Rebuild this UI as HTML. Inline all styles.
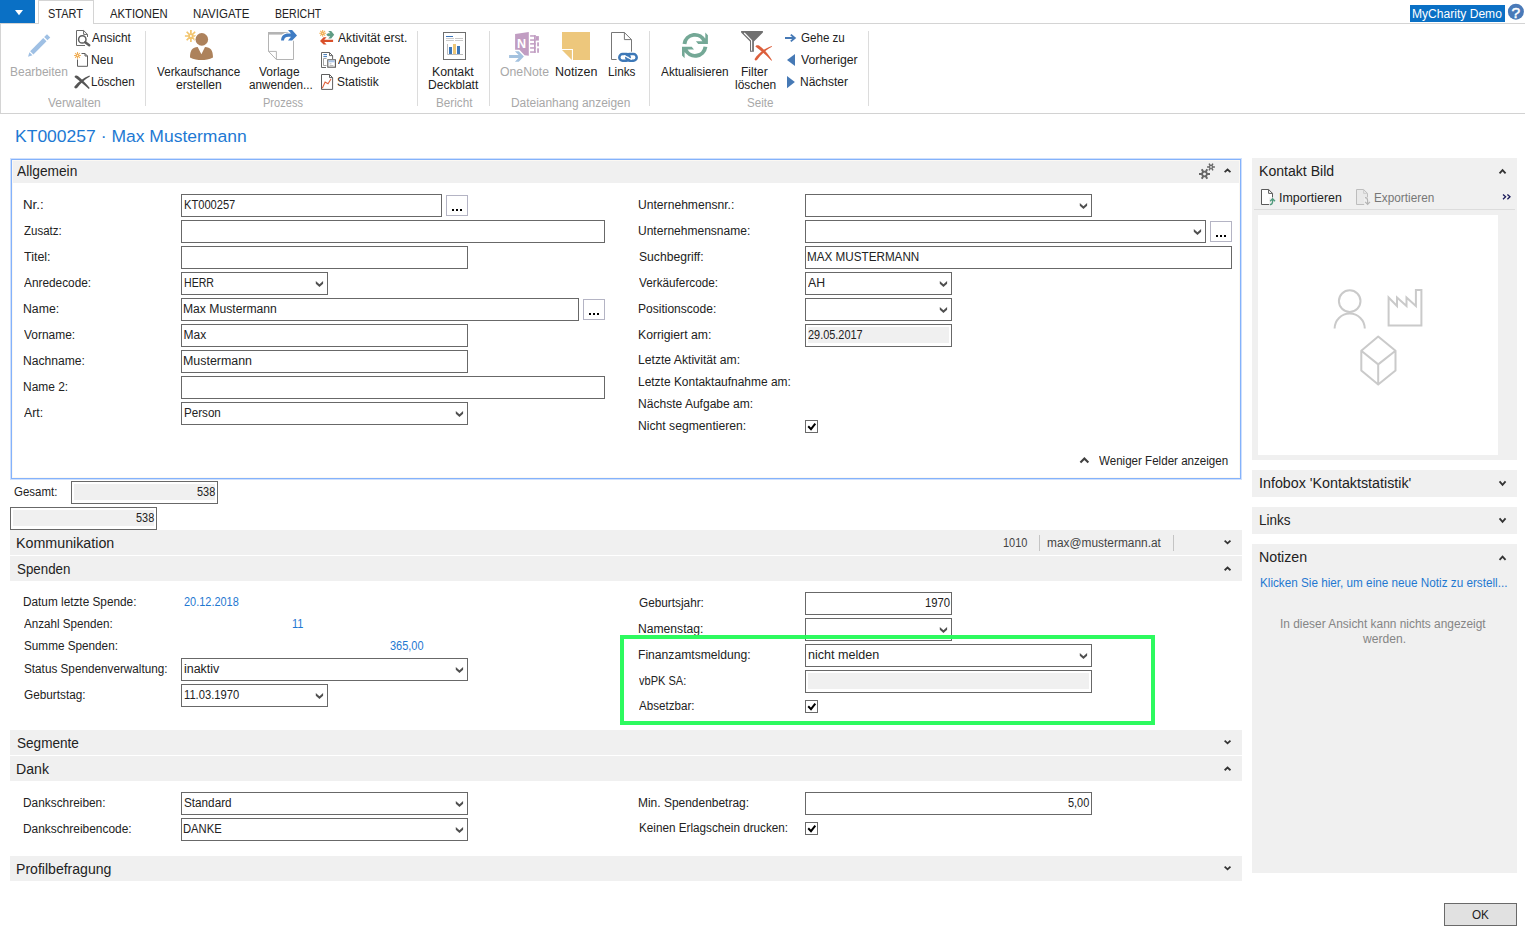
<!DOCTYPE html>
<html lang="de"><head><meta charset="utf-8"><title>KT000257 · Max Mustermann</title>
<style>
html,body{margin:0;padding:0;background:#fff;}
body{width:1525px;height:934px;position:relative;overflow:hidden;font-family:'Liberation Sans',sans-serif;font-size:12px;color:#222;}
div,span,svg{position:absolute;box-sizing:border-box;}
.t{white-space:pre;line-height:1;transform-origin:0 0;}
.inp{border:1px solid #686868;background:#fff;}
.ro{background:#f0f0f0;}
.btn{border:1px solid #b4b4c4;background:#fff;}
.hdr{background:#f0f0f0;}
.dot{width:2px;height:2px;background:#000;}
.cb{border:1px solid #6a6a6a;background:#fff;width:13px;height:13px;}
.sep{width:1px;background:#dadada;}
.g{left:0;top:0;width:0;height:0;}
</style></head>
<body>
<div class="g" id="ribbon">
<div style="left:0px;top:23px;width:1525px;height:1px;background:#d4d4d4"></div>
<div style="left:0px;top:24px;width:1px;height:90px;background:#d4d4d4"></div>
<div style="left:0px;top:113px;width:1525px;height:1px;background:#d2d2d2"></div>
<div style="left:0px;top:0px;width:35px;height:23px;background:#0a70c5"><svg style="left:15px;top:9.5px" width="8" height="6" viewBox="0 0 8 6"><path d="M0 0h8L4 5.2z" fill="#fff"/></svg></div>
<div style="left:38px;top:0px;width:56px;height:24px;border:1px solid #d4d4d4;border-bottom:0;background:#fff"></div>
<span class="t" style="left:48.14px;top:8px;font-size:12px;color:#222;transform:scaleX(0.9120)">START</span>
<span class="t" style="left:109.70px;top:8px;font-size:12px;color:#222;transform:scaleX(0.9405)">AKTIONEN</span>
<span class="t" style="left:192.64px;top:8px;font-size:12px;color:#222;transform:scaleX(0.9583)">NAVIGATE</span>
<span class="t" style="left:274.72px;top:8px;font-size:12px;color:#222;transform:scaleX(0.8777)">BERICHT</span>
<div style="left:1410px;top:5px;width:95px;height:17px;background:#0a70c5"></div>
<span class="t" style="left:1412.49px;top:8px;font-size:12px;color:#fff;transform:scaleX(1.0057)">MyCharity Demo</span>
<svg style="left:1507px;top:3px" width="18" height="18" viewBox="0 0 18 18"><circle cx="8.9" cy="8.7" r="8" fill="#4a7ab8"/><text x="8.9" y="14.5" font-family="Liberation Sans, sans-serif" font-size="15.5" fill="#fff" stroke="#fff" stroke-width="0.5" text-anchor="middle">?</text></svg>
<div style="left:145px;top:31px;width:1px;height:75px;background:#dcdcdc"></div>
<div style="left:417px;top:31px;width:1px;height:75px;background:#dcdcdc"></div>
<div style="left:489px;top:31px;width:1px;height:75px;background:#dcdcdc"></div>
<div style="left:649px;top:31px;width:1px;height:75px;background:#dcdcdc"></div>
<div style="left:868px;top:31px;width:1px;height:75px;background:#dcdcdc"></div>
<span class="t" style="left:10.30px;top:66px;font-size:12px;color:#a8a8a8;transform:scaleX(0.9973)">Bearbeiten</span>
<span class="t" style="left:92.00px;top:32px;font-size:12px;color:#222;transform:scaleX(0.9885)">Ansicht</span>
<span class="t" style="left:91.38px;top:54px;font-size:12px;color:#222;transform:scaleX(1.0173)">Neu</span>
<span class="t" style="left:91.44px;top:76px;font-size:12px;color:#222;transform:scaleX(0.9609)">Löschen</span>
<span class="t" style="left:47.90px;top:97px;font-size:12px;color:#a8a8a8;transform:scaleX(1.0019)">Verwalten</span>
<span class="t" style="left:156.80px;top:66px;font-size:12px;color:#222;transform:scaleX(0.9746)">Verkaufschance</span>
<span class="t" style="left:176.19px;top:79px;font-size:12px;color:#222;transform:scaleX(1.0114)">erstellen</span>
<span class="t" style="left:258.50px;top:66px;font-size:12px;color:#222;transform:scaleX(0.9963)">Vorlage</span>
<span class="t" style="left:248.71px;top:79px;font-size:12px;color:#222;transform:scaleX(0.9757)">anwenden...</span>
<span class="t" style="left:262.68px;top:97px;font-size:12px;color:#a8a8a8;transform:scaleX(0.9214)">Prozess</span>
<span class="t" style="left:337.80px;top:32px;font-size:12px;color:#222;transform:scaleX(1.0096)">Aktivität erst.</span>
<span class="t" style="left:337.80px;top:54px;font-size:12px;color:#222;transform:scaleX(1.0167)">Angebote</span>
<span class="t" style="left:337.30px;top:76px;font-size:12px;color:#222;transform:scaleX(0.9928)">Statistik</span>
<span class="t" style="left:431.97px;top:66px;font-size:12px;color:#222;transform:scaleX(1.0264)">Kontakt</span>
<span class="t" style="left:428.49px;top:79px;font-size:12px;color:#222;transform:scaleX(1.0061)">Deckblatt</span>
<span class="t" style="left:436.42px;top:97px;font-size:12px;color:#a8a8a8;transform:scaleX(0.9766)">Bericht</span>
<span class="t" style="left:500.49px;top:66px;font-size:12px;color:#a8a8a8;transform:scaleX(1.0213)">OneNote</span>
<span class="t" style="left:554.96px;top:66px;font-size:12px;color:#222;transform:scaleX(1.0410)">Notizen</span>
<span class="t" style="left:608.32px;top:66px;font-size:12px;color:#222;transform:scaleX(0.9811)">Links</span>
<span class="t" style="left:510.51px;top:97px;font-size:12px;color:#a8a8a8;transform:scaleX(0.9937)">Dateianhang anzeigen</span>
<span class="t" style="left:661.30px;top:66px;font-size:12px;color:#222;transform:scaleX(0.9853)">Aktualisieren</span>
<span class="t" style="left:741.00px;top:66px;font-size:12px;color:#222;transform:scaleX(1.0000)">Filter</span>
<span class="t" style="left:734.65px;top:79px;font-size:12px;color:#222;transform:scaleX(0.9962)">löschen</span>
<span class="t" style="left:747.32px;top:97px;font-size:12px;color:#a8a8a8;transform:scaleX(0.9676)">Seite</span>
<span class="t" style="left:801.02px;top:32px;font-size:12px;color:#222;transform:scaleX(0.9659)">Gehe zu</span>
<span class="t" style="left:800.50px;top:54px;font-size:12px;color:#222;transform:scaleX(1.0226)">Vorheriger</span>
<span class="t" style="left:799.50px;top:76px;font-size:12px;color:#222;transform:scaleX(0.9989)">Nächster</span>
<svg style="left:0;top:24px" width="1525" height="88" viewBox="0 24 1525 88">
<g transform="translate(28 56.7) rotate(-45.3)" fill="#9fc0e4"><path d="M0 0L4.2 -2.1L4.2 2.1z"/><rect x="5.4" y="-2.3" width="18.6" height="4.6"/><rect x="25.3" y="-2.3" width="4" height="4.6"/></g>
<path d="M76.5 30.5H83.6L87.5 34.4V37 M76.5 30.5V45.5H85" fill="none" stroke="#6a6a6a" stroke-width="1"/>
<path d="M83.6 30.5V34.4H87.5" fill="none" stroke="#6a6a6a" stroke-width="1"/>
<circle cx="82.3" cy="39.4" r="3.7" fill="#fff" stroke="#5e5e5e" stroke-width="1.5"/>
<path d="M85.2 42.3L89.2 45.2" stroke="#5e5e5e" stroke-width="2.5" stroke-linecap="round"/>
<path d="M81.5 53.5H85L87.5 56V66.3H77.5V59.5" fill="none" stroke="#5e5e5e" stroke-width="1"/>
<path d="M85 53.5V56H87.5" fill="none" stroke="#5e5e5e" stroke-width="1"/>
<path d="M78.28 55.40L80.90 55.40M78.05 55.95L79.90 57.80M77.50 56.18L77.50 58.80M76.95 55.95L75.10 57.80M76.72 55.40L74.10 55.40M76.95 54.85L75.10 53.00M77.50 54.62L77.50 52.00M78.05 54.85L79.90 53.00" stroke="#f0ae55" stroke-width="1.05" fill="none"/><circle cx="77.5" cy="55.4" r="1" fill="none" stroke="#f0ae55" stroke-width="0.945"/>
<path d="M74.5 76.9C75 75.3 76.6 75 77.9 75.9C82.2 79.4 86.2 83.4 89.7 88L88.8 88.9C84.5 85 79.5 80.9 74.5 76.9z" fill="#555"/>
<path d="M89.5 75.5L89.9 76.4C85 79.2 80.6 83.4 77.3 87.7C76.3 89 74.2 88.6 74.3 86.8C78 81.9 83.5 77.7 89.5 75.5z" fill="#555"/>
<path d="M192.59 36.00L196.90 36.00M192.10 37.20L195.14 40.24M190.90 37.69L190.90 42.00M189.70 37.20L186.66 40.24M189.21 36.00L184.90 36.00M189.70 34.80L186.66 31.76M190.90 34.31L190.90 30.00M192.10 34.80L195.14 31.76" stroke="#f2c56e" stroke-width="1.7" fill="none"/><circle cx="190.9" cy="36" r="1.7" fill="none" stroke="#f2c56e" stroke-width="1.53"/>
<circle cx="201.8" cy="39.4" r="7.3" fill="#fff"/>
<circle cx="201.8" cy="39.4" r="6.3" fill="#ad825c"/>
<path d="M197.7 47L201.4 54.2L205 47C210.5 47 213 50.5 213 57.4C209.5 59.4 205 59.9 201.4 59.9C198 59.9 193.5 59.4 190 57.4C190 50.5 192.5 47 197.7 47z" fill="#ad825c"/>
<path d="M268.5 32.5H293.5V59.5H276.4L268.5 51.4z" fill="#fff" stroke="#b4b4b4" stroke-width="1"/>
<rect x="268" y="32" width="26" height="2.6" fill="#b4b4b4"/>
<path d="M268.5 51.4H276.4V59.5" fill="none" stroke="#b4b4b4" stroke-width="1"/>
<path d="M281.1 40.6C281.1 36 284 33.6 288.4 33.6L291 33.6L288 30.1L292.1 30.1L297 35.4L292.1 40.6L288 40.6L291 36.7L288.6 36.7C285.6 36.7 284 38.2 284 40.6z" fill="#fff" stroke="#fff" stroke-width="2.2"/>
<path d="M281.1 40.6C281.1 36 284 33.6 288.4 33.6L291 33.6L288 30.1L292.1 30.1L297 35.4L292.1 40.6L288 40.6L291 36.7L288.6 36.7C285.6 36.7 284 38.2 284 40.6z" fill="#3f7cc4"/>
<path d="M323.48 33.30L326.10 33.30M323.25 33.85L325.10 35.70M322.70 34.08L322.70 36.70M322.15 33.85L320.30 35.70M321.92 33.30L319.30 33.30M322.15 32.75L320.30 30.90M322.70 32.52L322.70 29.90M323.25 32.75L325.10 30.90" stroke="#f0ae55" stroke-width="1.05" fill="none"/><circle cx="322.7" cy="33.3" r="1" fill="none" stroke="#f0ae55" stroke-width="0.945"/>
<path d="M326.2 34.8L328 33.3H330.3L328.2 31.1H331.2L334.2 34.7L331.2 38.4H328.2L330.3 36.2H328z" fill="#5f9c84"/>
<path d="M320 40.9L323.6 37.3H326.6L324.2 39.8H333.1V42H324.2L326.6 44.5H323.6z" fill="#d94f2a"/>
<path d="M326 67.5H321.5V52.5H329.5L332.6 55.6V59" fill="none" stroke="#666" stroke-width="1"/>
<path d="M329.5 52.5V55.6H332.6" fill="none" stroke="#666" stroke-width="1"/>
<path d="M323.4 54.6H327M323.4 56.6H327" stroke="#3f78b8" stroke-width="1"/>
<path d="M326.5 58.5H323.5V65.5H326.5" fill="none" stroke="#9a9a9a" stroke-width="0.9"/>
<rect x="327.8" y="59.8" width="7.6" height="7.4" fill="#fff" stroke="#5a5a5a" stroke-width="1.1"/>
<rect x="328.4" y="60.4" width="6.4" height="1.9" fill="#a8c4e8"/>
<path d="M329.6 63.8H331.4M329.6 65.5H333.4" stroke="#aaa" stroke-width="0.8"/>
<path d="M321.5 74.5H329.5L332.6 77.6V89.4H321.5z" fill="#fff" stroke="#5e5e5e" stroke-width="1"/>
<path d="M329.5 74.5V77.6H332.6" fill="none" stroke="#5e5e5e" stroke-width="1"/>
<path d="M322.3 88.3L325.1 82L328 83.8L331 79" fill="none" stroke="#e0603a" stroke-width="1.1"/>
<rect x="443.5" y="32.5" width="22" height="27" fill="#fff" stroke="#6e6e6e" stroke-width="1"/>
<path d="M446 36.5H453" stroke="#3b74b8" stroke-width="1"/>
<path d="M446 38.5H453.9M455 38.5H463M446 40.5H453.9M455 40.5H463" stroke="#c4c4c4" stroke-width="0.9"/>
<path d="M447.5 44V54.5H463" fill="none" stroke="#b4b4b4" stroke-width="0.9"/>
<rect x="449" y="47" width="3" height="7" fill="#3f78b8"/><rect x="453" y="44" width="3" height="10" fill="#edc676"/><rect x="457" y="46" width="3" height="8" fill="#3f78b8"/>
<path d="M515.1 34.1L528.8 32V55.8L524.6 55.2L519.4 49.8H515.1z" fill="#c19dc2"/>
<text x="521.5" y="47.8" font-family="Liberation Sans, sans-serif" font-weight="bold" font-size="12.6" fill="#fff" text-anchor="middle">N</text>
<rect x="530.1" y="35.2" width="5.6" height="1.5" fill="#c19dc2"/>
<rect x="530.1" y="39.3" width="5.6" height="1.5" fill="#c19dc2"/>
<rect x="530.1" y="43.1" width="5.6" height="1.5" fill="#c19dc2"/>
<rect x="530.1" y="47.2" width="5.6" height="1.5" fill="#c19dc2"/>
<rect x="530.1" y="51.3" width="5.6" height="1.5" fill="#c19dc2"/>
<rect x="534" y="35.2" width="1.7" height="17.6" fill="#c19dc2"/>
<rect x="535.7" y="36.1" width="3.2" height="4.5" fill="#c19dc2"/><rect x="537.2" y="42.3" width="1.7" height="4" fill="#c19dc2"/><rect x="537.2" y="48.3" width="1.7" height="4.5" fill="#c19dc2"/>
<path d="M509.1 55.1H518.6L514.9 51.3H518.8L523.9 56.5L518.8 61.8H514.9L518.6 57.9H509.1z" fill="#a4c2df"/>
<path d="M562 32H590V60H573V48.9H562z" fill="#edc77c"/><path d="M562 50.1H571.9V59.9z" fill="#edc77c"/>
<path d="M616.6 59.5H611.5V32.5H624.4L631.5 39.6V51.7" fill="none" stroke="#777" stroke-width="1"/>
<path d="M624.4 32.5V39.6H631.5" fill="none" stroke="#777" stroke-width="1"/>
<rect x="618" y="52.4" width="20.4" height="10" fill="#fff"/>
<rect x="619.3" y="54.1" width="10.4" height="6.6" rx="3.3" fill="none" stroke="#3d78b7" stroke-width="2.5"/>
<rect x="626.3" y="54.1" width="10.4" height="6.6" rx="3.3" fill="none" stroke="#3d78b7" stroke-width="2.5"/>
<path d="M624.2 55.4L631.8 59.4" stroke="#fff" stroke-width="1.1"/>
<path d="M684.45 43.9A10.45 10.45 0 0 1 704.5 41.4" fill="none" stroke="#74a896" stroke-width="3.9"/><path d="M705.3 32.5L707.9 35.2V43.9H698.2L695.9 41.3H703L705.3 38.3z" fill="#74a896"/>
<g transform="rotate(180 694.95 45.35)"><path d="M684.45 43.9A10.45 10.45 0 0 1 704.5 41.4" fill="none" stroke="#74a896" stroke-width="3.9"/><path d="M705.3 32.5L707.9 35.2V43.9H698.2L695.9 41.3H703L705.3 38.3z" fill="#74a896"/></g>
<path d="M741.1 30.9H762.9V32.6L753.9 41.6V51.8H750V41.6L741.1 32.6z" fill="#707070"/>
<path d="M744.2 33L751.6 40.4V50.8" fill="none" stroke="#fff" stroke-width="1.1"/>
<path d="M755.4 46.6C756 45 757.6 44.8 759 45.6C764 49 768.5 54 772 60.2L771.4 60.8C766.5 55.5 761.5 51 755.4 46.6z" fill="#dc5f3c"/>
<path d="M771.8 46L772 46.8C766 50 761 54.5 757.2 59.8C756.4 61 754.6 60.6 754.6 59C758.5 53 764.5 48.5 771.8 46z" fill="#dc5f3c"/>
<path d="M785 38H794.5M790.8 34.6L794.8 38L790.8 41.4" fill="none" stroke="#4679b5" stroke-width="1.9"/>
<path d="M795 54V66L787 60z" fill="#4679b5"/>
<path d="M787 76V88.2L794.9 82.1z" fill="#4679b5"/>
</svg>
</div><div class="g" id="title">
<span class="t" style="left:14.67px;top:128px;font-size:17.2px;color:#1d79d3;transform:scaleX(1.0189)">KT000257 · Max Mustermann</span>
</div><div class="g" id="allgemein">
<div style="left:10px;top:158px;width:1232px;height:322px;border:1px solid #cfe0fd;background:#fff"></div>
<div style="left:11px;top:159px;width:1230px;height:320px;border:1px solid #84b2fb"></div>
<div style="left:12px;top:160px;width:1228px;height:318px;border:1px solid #fbf8f3"></div>
<div style="left:13px;top:161px;width:1226px;height:22px;background:#f0f0f0"></div>
<span class="t" style="left:17.00px;top:164px;font-size:14px;color:#222;transform:scaleX(0.9802)">Allgemein</span>
<svg style="left:1222px;top:166px" width="13" height="10" viewBox="0 0 13 10"><path d="M2.64 6.16L5.55 3.47L8.46 6.16" fill="none" stroke="#333" stroke-width="1.8"/></svg>
<svg style="left:1194px;top:160px" width="30" height="23" viewBox="1194 160 30 23"><path d="M1207.06 174.00L1210.00 174.00M1205.78 176.22L1207.25 178.76M1203.22 176.22L1201.75 178.76M1201.94 174.00L1199.00 174.00M1203.22 171.78L1201.75 169.24M1205.78 171.78L1207.25 169.24" stroke="#666" stroke-width="2" fill="none"/><circle cx="1204.5" cy="174" r="2.35" fill="none" stroke="#666" stroke-width="1.7"/><path d="M1212.68 166.90L1214.90 166.90M1211.84 168.35L1212.95 170.28M1210.16 168.35L1209.05 170.28M1209.32 166.90L1207.10 166.90M1210.16 165.45L1209.05 163.52M1211.84 165.45L1212.95 163.52" stroke="#666" stroke-width="1.5" fill="none"/><circle cx="1211" cy="166.9" r="1.5" fill="none" stroke="#666" stroke-width="1.2"/></svg>
<span class="t" style="left:23.29px;top:199px;font-size:12px;color:#222;transform:scaleX(1.1091)">Nr.:</span>
<span class="t" style="left:23.92px;top:225px;font-size:12px;color:#222;transform:scaleX(0.9563)">Zusatz:</span>
<span class="t" style="left:24.14px;top:251px;font-size:12px;color:#222;transform:scaleX(1.0392)">Titel:</span>
<span class="t" style="left:24.40px;top:277px;font-size:12px;color:#222;transform:scaleX(0.9866)">Anredecode:</span>
<span class="t" style="left:23.38px;top:303px;font-size:12px;color:#222;transform:scaleX(1.0226)">Name:</span>
<span class="t" style="left:24.40px;top:329px;font-size:12px;color:#222;transform:scaleX(0.9950)">Vorname:</span>
<span class="t" style="left:23.39px;top:355px;font-size:12px;color:#222;transform:scaleX(1.0093)">Nachname:</span>
<span class="t" style="left:23.40px;top:381px;font-size:12px;color:#222;transform:scaleX(0.9965)">Name 2:</span>
<span class="t" style="left:24.40px;top:407px;font-size:12px;color:#222;transform:scaleX(1.0229)">Art:</span>
<div class="inp" style="left:181px;top:194px;width:261px;height:23px"></div><span class="t" style="left:183.57px;top:199px;font-size:12px;color:#222;transform:scaleX(0.9265)">KT000257</span>
<div class="btn" style="left:446px;top:195px;width:22px;height:21px"><div class="dot" style="left:5px;top:13px"></div><div class="dot" style="left:9px;top:13px"></div><div class="dot" style="left:13px;top:13px"></div></div>
<div class="inp" style="left:181px;top:220px;width:424px;height:23px"></div>
<div class="inp" style="left:181px;top:246px;width:287px;height:23px"></div>
<div class="inp" style="left:181px;top:272px;width:147px;height:23px"></div><span class="t" style="left:183.62px;top:277px;font-size:12px;color:#222;transform:scaleX(0.8806)">HERR</span><svg style="left:313px;top:278px" width="13" height="12" viewBox="0 0 13 12"><path d="M2.80 2.90L6.45 6.20L10.10 2.90L10.10 5.70L6.45 9.00L2.80 5.70z" fill="#505050"/></svg>
<div class="inp" style="left:181px;top:298px;width:398px;height:23px"></div><span class="t" style="left:183.49px;top:303px;font-size:12px;color:#222;transform:scaleX(1.0121)">Max Mustermann</span>
<div class="btn" style="left:583px;top:299px;width:22px;height:21px"><div class="dot" style="left:5px;top:13px"></div><div class="dot" style="left:9px;top:13px"></div><div class="dot" style="left:13px;top:13px"></div></div>
<div class="inp" style="left:181px;top:324px;width:287px;height:23px"></div><span class="t" style="left:183.50px;top:329px;font-size:12px;color:#222;transform:scaleX(1.0000)">Max</span>
<div class="inp" style="left:181px;top:350px;width:287px;height:23px"></div><span class="t" style="left:183.47px;top:355px;font-size:12px;color:#222;transform:scaleX(1.0338)">Mustermann</span>
<div class="inp" style="left:181px;top:376px;width:424px;height:23px"></div>
<div class="inp" style="left:181px;top:402px;width:287px;height:23px"></div><span class="t" style="left:183.53px;top:407px;font-size:12px;color:#222;transform:scaleX(0.9683)">Person</span><svg style="left:453px;top:408px" width="13" height="12" viewBox="0 0 13 12"><path d="M2.80 2.90L6.45 6.20L10.10 2.90L10.10 5.70L6.45 9.00L2.80 5.70z" fill="#505050"/></svg>
<span class="t" style="left:638.39px;top:199px;font-size:12px;color:#222;transform:scaleX(1.0102)">Unternehmensnr.:</span>
<span class="t" style="left:638.40px;top:225px;font-size:12px;color:#222;transform:scaleX(1.0018)">Unternehmensname:</span>
<span class="t" style="left:638.89px;top:251px;font-size:12px;color:#222;transform:scaleX(1.0120)">Suchbegriff:</span>
<span class="t" style="left:639.40px;top:277px;font-size:12px;color:#222;transform:scaleX(0.9793)">Verkäufercode:</span>
<span class="t" style="left:638.40px;top:303px;font-size:12px;color:#222;transform:scaleX(1.0026)">Positionscode:</span>
<span class="t" style="left:638.38px;top:329px;font-size:12px;color:#222;transform:scaleX(1.0186)">Korrigiert am:</span>
<span class="t" style="left:638.39px;top:354px;font-size:12px;color:#222;transform:scaleX(1.0137)">Letzte Aktivität am:</span>
<span class="t" style="left:638.40px;top:376px;font-size:12px;color:#222;transform:scaleX(0.9960)">Letzte Kontaktaufnahme am:</span>
<span class="t" style="left:638.40px;top:398px;font-size:12px;color:#222;transform:scaleX(1.0040)">Nächste Aufgabe am:</span>
<span class="t" style="left:638.39px;top:420px;font-size:12px;color:#222;transform:scaleX(1.0138)">Nicht segmentieren:</span>
<div class="inp" style="left:805px;top:194px;width:287px;height:23px"></div><svg style="left:1077px;top:200px" width="13" height="12" viewBox="0 0 13 12"><path d="M2.80 2.90L6.45 6.20L10.10 2.90L10.10 5.70L6.45 9.00L2.80 5.70z" fill="#505050"/></svg>
<div class="inp" style="left:805px;top:220px;width:401px;height:23px"></div><svg style="left:1191px;top:226px" width="13" height="12" viewBox="0 0 13 12"><path d="M2.80 2.90L6.45 6.20L10.10 2.90L10.10 5.70L6.45 9.00L2.80 5.70z" fill="#505050"/></svg>
<div class="btn" style="left:1210px;top:221px;width:22px;height:21px"><div class="dot" style="left:5px;top:13px"></div><div class="dot" style="left:9px;top:13px"></div><div class="dot" style="left:13px;top:13px"></div></div>
<div class="inp" style="left:805px;top:246px;width:427px;height:23px"></div><span class="t" style="left:807.33px;top:251px;font-size:12px;color:#222;transform:scaleX(0.9736)">MAX MUSTERMANN</span>
<div class="inp" style="left:805px;top:272px;width:147px;height:23px"></div><span class="t" style="left:808.30px;top:277px;font-size:12px;color:#222;transform:scaleX(1.0222)">AH</span><svg style="left:937px;top:278px" width="13" height="12" viewBox="0 0 13 12"><path d="M2.80 2.90L6.45 6.20L10.10 2.90L10.10 5.70L6.45 9.00L2.80 5.70z" fill="#505050"/></svg>
<div class="inp" style="left:805px;top:298px;width:147px;height:23px"></div><svg style="left:937px;top:304px" width="13" height="12" viewBox="0 0 13 12"><path d="M2.80 2.90L6.45 6.20L10.10 2.90L10.10 5.70L6.45 9.00L2.80 5.70z" fill="#505050"/></svg>
<div class="inp" style="left:805px;top:324px;width:147px;height:23px"><div class="ro" style="left:2px;top:2px;width:141px;height:16px"></div></div><span class="t" style="left:807.84px;top:329px;font-size:12px;color:#222;transform:scaleX(0.9102)">29.05.2017</span>
<div class="cb" style="left:805px;top:420px"><svg style="left:0;top:0" width="11" height="11" viewBox="0 0 11 11"><path d="M2.2 5.3 L5 8.2 L9.3 2.7" fill="none" stroke="#000" stroke-width="2"/></svg></div>
<svg style="left:1077px;top:455px" width="15" height="12" viewBox="0 0 15 12"><path d="M3.44 7.56L7.40 3.48L11.36 7.56" fill="none" stroke="#404040" stroke-width="2.1"/></svg>
<span class="t" style="left:1099.30px;top:455px;font-size:12px;color:#222;transform:scaleX(0.9647)">Weniger Felder anzeigen</span>
</div><div class="g" id="gesamt">
<span class="t" style="left:14.02px;top:486px;font-size:12px;color:#222;transform:scaleX(0.9554)">Gesamt:</span>
<div class="inp" style="left:71px;top:481px;width:147px;height:23px"><div class="ro" style="left:2px;top:2px;width:141px;height:16px"></div></div><span class="t" style="left:197.04px;top:486px;font-size:12px;color:#222;transform:scaleX(0.9105)">538</span>
<div class="inp" style="left:10px;top:507px;width:147px;height:23px"><div class="ro" style="left:2px;top:2px;width:141px;height:16px"></div></div><span class="t" style="left:136.14px;top:512px;font-size:12px;color:#222;transform:scaleX(0.9105)">538</span>
</div><div class="g" id="kommunikation">
<div class="hdr" style="left:10px;top:530px;width:1232px;height:25px"></div><span class="t" style="left:16.03px;top:536px;font-size:14px;color:#222;transform:scaleX(1.0186)">Kommunikation</span><svg style="left:1222px;top:538px" width="13" height="10" viewBox="0 0 13 10"><path d="M2.64 2.64L5.55 5.33L8.46 2.64" fill="none" stroke="#333" stroke-width="1.8"/></svg>
<span class="t" style="left:1002.69px;top:537px;font-size:12px;color:#444;transform:scaleX(0.9149)">1010</span>
<div style="left:1039px;top:535px;width:1px;height:16px;background:#c4c4c4"></div>
<span class="t" style="left:1046.76px;top:537px;font-size:12px;color:#444;transform:scaleX(0.9912)">max@mustermann.at</span>
<div style="left:1173px;top:535px;width:1px;height:16px;background:#c4c4c4"></div>
</div><div class="g" id="spenden">
<div class="hdr" style="left:10px;top:556px;width:1232px;height:25px"></div><span class="t" style="left:16.59px;top:562px;font-size:14px;color:#222;transform:scaleX(0.9523)">Spenden</span><svg style="left:1222px;top:564px" width="13" height="10" viewBox="0 0 13 10"><path d="M2.64 6.26L5.55 3.57L8.46 6.26" fill="none" stroke="#333" stroke-width="1.8"/></svg>
<span class="t" style="left:23.32px;top:596px;font-size:12px;color:#222;transform:scaleX(0.9828)">Datum letzte Spende:</span>
<span class="t" style="left:183.94px;top:596px;font-size:12px;color:#1f78d1;transform:scaleX(0.9119)">20.12.2018</span>
<span class="t" style="left:24.30px;top:618px;font-size:12px;color:#222;transform:scaleX(0.9695)">Anzahl Spenden:</span>
<span class="t" style="left:291.98px;top:618px;font-size:12px;color:#1f78d1;transform:scaleX(0.9182)">11</span>
<span class="t" style="left:23.81px;top:640px;font-size:12px;color:#222;transform:scaleX(0.9778)">Summe Spenden:</span>
<span class="t" style="left:389.64px;top:640px;font-size:12px;color:#1f78d1;transform:scaleX(0.9147)">365,00</span>
<span class="t" style="left:23.81px;top:663px;font-size:12px;color:#222;transform:scaleX(0.9783)">Status Spendenverwaltung:</span>
<div class="inp" style="left:181px;top:658px;width:287px;height:23px"></div><span class="t" style="left:183.62px;top:663px;font-size:12px;color:#222;transform:scaleX(1.0376)">inaktiv</span><svg style="left:453px;top:664px" width="13" height="12" viewBox="0 0 13 12"><path d="M2.80 2.90L6.45 6.20L10.10 2.90L10.10 5.70L6.45 9.00L2.80 5.70z" fill="#505050"/></svg>
<span class="t" style="left:23.81px;top:689px;font-size:12px;color:#222;transform:scaleX(0.9812)">Geburtstag:</span>
<div class="inp" style="left:181px;top:684px;width:147px;height:23px"></div><span class="t" style="left:184.47px;top:689px;font-size:12px;color:#222;transform:scaleX(0.9316)">11.03.1970</span><svg style="left:313px;top:690px" width="13" height="12" viewBox="0 0 13 12"><path d="M2.80 2.90L6.45 6.20L10.10 2.90L10.10 5.70L6.45 9.00L2.80 5.70z" fill="#505050"/></svg>
<span class="t" style="left:638.81px;top:597px;font-size:12px;color:#222;transform:scaleX(0.9829)">Geburtsjahr:</span>
<div class="inp" style="left:805px;top:592px;width:147px;height:23px"></div><span class="t" style="left:924.76px;top:597px;font-size:12px;color:#222;transform:scaleX(0.9426)">1970</span>
<span class="t" style="left:638.29px;top:623px;font-size:12px;color:#222;transform:scaleX(1.0104)">Namenstag:</span>
<div class="inp" style="left:805px;top:618px;width:147px;height:23px"></div><svg style="left:937px;top:624px" width="13" height="12" viewBox="0 0 13 12"><path d="M2.80 2.90L6.45 6.20L10.10 2.90L10.10 5.70L6.45 9.00L2.80 5.70z" fill="#505050"/></svg>
<span class="t" style="left:638.29px;top:649px;font-size:12px;color:#222;transform:scaleX(1.0114)">Finanzamtsmeldung:</span>
<div class="inp" style="left:805px;top:644px;width:287px;height:23px"></div><span class="t" style="left:807.61px;top:649px;font-size:12px;color:#222;transform:scaleX(1.0481)">nicht melden</span><svg style="left:1077px;top:650px" width="13" height="12" viewBox="0 0 13 12"><path d="M2.80 2.90L6.45 6.20L10.10 2.90L10.10 5.70L6.45 9.00L2.80 5.70z" fill="#505050"/></svg>
<span class="t" style="left:639.30px;top:675px;font-size:12px;color:#222;transform:scaleX(0.9194)">vbPK SA:</span>
<div class="inp" style="left:805px;top:670px;width:287px;height:23px"><div class="ro" style="left:2px;top:2px;width:281px;height:16px"></div></div>
<span class="t" style="left:639.30px;top:700px;font-size:12px;color:#222;transform:scaleX(0.9671)">Absetzbar:</span>
<div class="cb" style="left:805px;top:700px"><svg style="left:0;top:0" width="11" height="11" viewBox="0 0 11 11"><path d="M2.2 5.3 L5 8.2 L9.3 2.7" fill="none" stroke="#000" stroke-width="2"/></svg></div>
<div style="left:620px;top:635px;width:535px;height:90px;border:4px solid rgba(38,250,90,0.97)"></div>
</div><div class="g" id="segmente">
<div class="hdr" style="left:10px;top:730px;width:1232px;height:25px"></div><span class="t" style="left:16.57px;top:736px;font-size:14px;color:#222;transform:scaleX(0.9696)">Segmente</span><svg style="left:1222px;top:738px" width="13" height="10" viewBox="0 0 13 10"><path d="M2.64 2.64L5.55 5.33L8.46 2.64" fill="none" stroke="#333" stroke-width="1.8"/></svg>
</div><div class="g" id="dank">
<div class="hdr" style="left:10px;top:756px;width:1232px;height:25px"></div><span class="t" style="left:16.04px;top:762px;font-size:14px;color:#222;transform:scaleX(1.0080)">Dank</span><svg style="left:1222px;top:764px" width="13" height="10" viewBox="0 0 13 10"><path d="M2.64 6.26L5.55 3.57L8.46 6.26" fill="none" stroke="#333" stroke-width="1.8"/></svg>
<span class="t" style="left:23.21px;top:797px;font-size:12px;color:#222;transform:scaleX(0.9895)">Dankschreiben:</span>
<div class="inp" style="left:181px;top:792px;width:287px;height:23px"></div><span class="t" style="left:183.91px;top:797px;font-size:12px;color:#222;transform:scaleX(0.9768)">Standard</span><svg style="left:453px;top:798px" width="13" height="12" viewBox="0 0 13 12"><path d="M2.80 2.90L6.45 6.20L10.10 2.90L10.10 5.70L6.45 9.00L2.80 5.70z" fill="#505050"/></svg>
<span class="t" style="left:23.21px;top:823px;font-size:12px;color:#222;transform:scaleX(0.9930)">Dankschreibencode:</span>
<div class="inp" style="left:181px;top:818px;width:287px;height:23px"></div><span class="t" style="left:183.46px;top:823px;font-size:12px;color:#222;transform:scaleX(0.9358)">DANKE</span><svg style="left:453px;top:824px" width="13" height="12" viewBox="0 0 13 12"><path d="M2.80 2.90L6.45 6.20L10.10 2.90L10.10 5.70L6.45 9.00L2.80 5.70z" fill="#505050"/></svg>
<span class="t" style="left:637.50px;top:797px;font-size:12px;color:#222;transform:scaleX(0.9968)">Min. Spendenbetrag:</span>
<div class="inp" style="left:805px;top:792px;width:287px;height:23px"></div><span class="t" style="left:1067.74px;top:797px;font-size:12px;color:#222;transform:scaleX(0.9111)">5,00</span>
<span class="t" style="left:638.52px;top:822px;font-size:12px;color:#222;transform:scaleX(0.9758)">Keinen Erlagschein drucken:</span>
<div class="cb" style="left:805px;top:822px"><svg style="left:0;top:0" width="11" height="11" viewBox="0 0 11 11"><path d="M2.2 5.3 L5 8.2 L9.3 2.7" fill="none" stroke="#000" stroke-width="2"/></svg></div>
</div><div class="g" id="profilbefragung">
<div class="hdr" style="left:10px;top:856px;width:1232px;height:25px"></div><span class="t" style="left:16.04px;top:862px;font-size:14px;color:#222;transform:scaleX(1.0049)">Profilbefragung</span><svg style="left:1222px;top:864px" width="13" height="10" viewBox="0 0 13 10"><path d="M2.64 2.64L5.55 5.33L8.46 2.64" fill="none" stroke="#333" stroke-width="1.8"/></svg>
</div><div class="g" id="factboxes">
<div style="left:1252px;top:158px;width:265px;height:302px;background:#f0f0f0"></div>
<span class="t" style="left:1259.34px;top:164px;font-size:14px;color:#222;transform:scaleX(1.0055)">Kontakt Bild</span>
<svg style="left:1496px;top:166px" width="13" height="11" viewBox="0 0 13 11"><path d="M3.54 7.46L6.55 4.17L9.56 7.46" fill="none" stroke="#333" stroke-width="1.8"/></svg>
<span class="t" style="left:1279.26px;top:192px;font-size:12px;color:#222;transform:scaleX(1.0356)">Importieren</span>
<span class="t" style="left:1374.42px;top:192px;font-size:12px;color:#777;transform:scaleX(0.9815)">Exportieren</span>
<div style="left:1254px;top:209px;width:261px;height:1px;background:#dcdcdc"></div>
<div style="left:1258px;top:215px;width:240px;height:240px;background:#fff"></div>
<svg style="left:1252px;top:184px" width="265" height="272" viewBox="1252 184 265 272">
<path d="M1261.5 189.5H1268.6L1272.5 193.4V204.5H1261.5z" fill="#fff" stroke="#5a5a5a" stroke-width="1"/>
<path d="M1268.6 189.5V193.4H1272.5" fill="none" stroke="#5a5a5a" stroke-width="1"/>
<rect x="1269.2" y="197.4" width="6.6" height="8" fill="#f0f0f0"/>
<path d="M1270 204.6C1271.8 204.6 1272.6 203.6 1272.6 201.6V198.8M1270.2 201.2L1272.6 198.6L1275 201.2" fill="none" stroke="#4f9a7c" stroke-width="1.3"/>
<path d="M1356.5 189.5H1363.6L1367.5 193.4V204.5H1356.5z" fill="#e9e9e9" stroke="#bdbdbd" stroke-width="1"/>
<path d="M1363.6 189.5V193.4H1367.5" fill="none" stroke="#c8c8c8" stroke-width="0.9"/>
<rect x="1364.2" y="197.4" width="6.6" height="8" fill="#f0f0f0"/>
<path d="M1365 197.6C1366.8 197.6 1367.6 198.6 1367.6 200.6V204M1365.2 201.8L1367.6 204.4L1370 201.8" fill="none" stroke="#b4b4b4" stroke-width="1.2"/>
<path d="M1503 194.4L1505.6 196.8L1503 199.2M1507.4 194.4L1510 196.8L1507.4 199.2" fill="none" stroke="#1a1a5a" stroke-width="1.3"/>
<circle cx="1349.7" cy="301.1" r="10.8" fill="none" stroke="#cacaca" stroke-width="2"/>
<path d="M1334.6 328.6A15.1 15.1 0 0 1 1364.8 328.6" fill="none" stroke="#cacaca" stroke-width="2"/>
<path d="M1388.6 297.5L1397 306L1397 297.5L1406.5 306L1406.5 297.5L1415.9 306V290H1421.4V325.6H1388.6z" fill="none" stroke="#cacaca" stroke-width="2"/>
<path d="M1378.2 336.6L1395.5 350.8V370.4L1378.2 384.6L1361.3 370.4V350.8zM1361.3 350.8L1378.2 364.4L1395.5 350.8M1378.2 364.4V384.6" fill="none" stroke="#cacaca" stroke-width="2" stroke-linejoin="round"/>
</svg>
<div style="left:1252px;top:470px;width:265px;height:27px;background:#f0f0f0"></div>
<span class="t" style="left:1259.32px;top:476px;font-size:14px;color:#222;transform:scaleX(1.0200)">Infobox &#x27;Kontaktstatistik&#x27;</span>
<svg style="left:1496px;top:478px" width="13" height="11" viewBox="0 0 13 11"><path d="M3.54 3.44L6.55 6.93L9.56 3.44" fill="none" stroke="#333" stroke-width="1.8"/></svg>
<div style="left:1252px;top:507px;width:265px;height:27px;background:#f0f0f0"></div>
<span class="t" style="left:1259.39px;top:513px;font-size:14px;color:#222;transform:scaleX(0.9645)">Links</span>
<svg style="left:1496px;top:515px" width="13" height="11" viewBox="0 0 13 11"><path d="M3.54 3.44L6.55 6.93L9.56 3.44" fill="none" stroke="#333" stroke-width="1.8"/></svg>
<div style="left:1252px;top:544px;width:265px;height:329px;background:#f0f0f0"></div>
<span class="t" style="left:1259.33px;top:550px;font-size:14px;color:#222;transform:scaleX(1.0144)">Notizen</span>
<svg style="left:1496px;top:553px" width="13" height="11" viewBox="0 0 13 11"><path d="M3.54 6.86L6.55 3.57L9.56 6.86" fill="none" stroke="#333" stroke-width="1.8"/></svg>
<span class="t" style="left:1260.22px;top:577px;font-size:12px;color:#1f78d1;transform:scaleX(0.9761)">Klicken Sie hier, um eine neue Notiz zu erstell...</span>
<span class="t" style="left:1280.21px;top:618px;font-size:12px;color:#858585;transform:scaleX(0.9913)">In dieser Ansicht kann nichts angezeigt</span>
<span class="t" style="left:1363.00px;top:633px;font-size:12px;color:#858585;transform:scaleX(1.0084)">werden.</span>
<div style="left:1444px;top:903px;width:73px;height:23px;border:1px solid #6a6a6a;background:#e1e1e1"></div>
<span class="t" style="left:1471.71px;top:909px;font-size:12px;color:#222;transform:scaleX(0.9758)">OK</span>
</div>
</body></html>
